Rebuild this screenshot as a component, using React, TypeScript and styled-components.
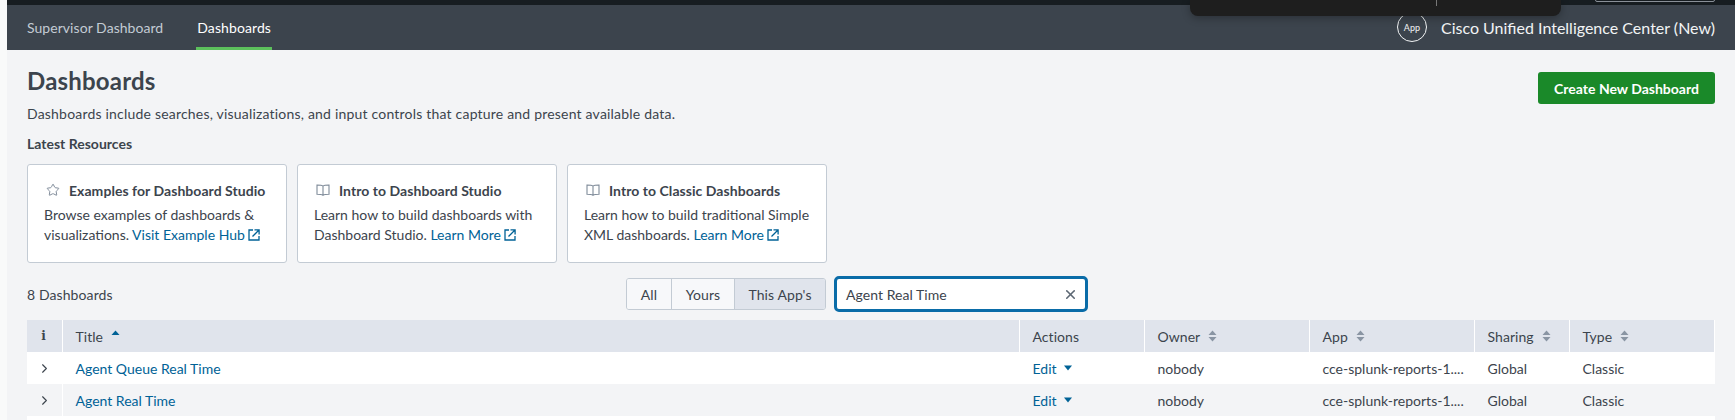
import { FC, ReactNode } from 'react'
import { ChevronRight, Star, X } from 'lucide-react'
import styled, { createGlobalStyle } from 'styled-components'

const colors = {
  page: '#f3f4f6',
  strip: '#f9fafa',
  nav: '#3c444d',
  top: '#171d21',
  text: '#3c444d',
  link: '#006296',
  head: '#e0e4ec',
  line: '#c3cbd4',
  focus: '#0a6ca8',
}

const GlobalStyle = createGlobalStyle`
  html, body {
    margin: 0;
    padding: 0;
    height: 420px;
    overflow: hidden;
    background: ${colors.strip};
  }
  body {
    font-family: Lato, "Open Sans", sans-serif;
    font-size: 14px;
    color: ${colors.text};
  }
  * {
    box-sizing: border-box;
  }
`

const Shell = styled.div`
  position: relative;
  margin-left: 7px;
  height: 420px;
  overflow: hidden;
  background: ${colors.page};
`

const TopBar = styled.div`
  height: 5px;
  background: ${colors.top};
`

const TopBox = styled.div`
  position: absolute;
  top: -4px;
  left: 1588px;
  width: 120px;
  height: 6px;
  border: 1px solid #8a9098;
  border-radius: 2px;
`

const Overlay = styled.div`
  position: absolute;
  top: 0;
  left: 1183px;
  width: 371px;
  height: 16px;
  background: #1e1e1e;
  border-radius: 0 0 8px 8px;
  box-shadow: 0 2px 8px rgba(0, 0, 0, 0.3);
  z-index: 2;
`

const OverlayRule = styled.div`
  position: absolute;
  top: 0;
  left: 246px;
  width: 1px;
  height: 6px;
  background: #777;
`

const Nav = styled.nav`
  display: flex;
  align-items: stretch;
  height: 45px;
  padding: 0 20px;
  background: ${colors.nav};
`

const Tab = styled.a<{ $active?: boolean }>`
  display: flex;
  align-items: center;
  margin-right: ${(p) => (p.$active ? 0 : '33px')};
  padding: 0 ${(p) => (p.$active ? '1px' : 0)};
  font-size: 14px;
  letter-spacing: ${(p) => (p.$active ? '0.1px' : '0.05px')};
  color: ${(p) => (p.$active ? '#ffffff' : '#c3cbd4')};
  border-bottom: 3px solid ${(p) => (p.$active ? '#5cc05c' : 'transparent')};
  border-top: 3px solid transparent;
`

const AppInfo = styled.div`
  display: flex;
  align-items: center;
  gap: 14px;
  margin-left: auto;
  color: #f2f4f5;
  font-size: 16px;
`

const AppBadge = styled.span`
  display: flex;
  align-items: center;
  justify-content: center;
  width: 30px;
  height: 30px;
  margin-top: -1px;
  border: 1px solid #f2f4f5;
  border-radius: 50%;
  font-size: 9px;
`

const Main = styled.main`
  padding: 0 20px;
`

const Header = styled.div`
  display: flex;
  justify-content: space-between;
  align-items: flex-start;
  height: 56px;
  padding-top: 16px;
`

const Title = styled.h1`
  margin: 0;
  font-size: 24px;
  line-height: 30px;
  font-weight: 700;
  letter-spacing: 0.2px;
  color: ${colors.text};
`

const CreateButton = styled.button`
  width: 177px;
  height: 32px;
  margin-top: 6px;
  padding: 0;
  border: 0;
  border-radius: 3px;
  font-family: inherit;
  font-size: 14px;
  font-weight: 700;
  color: #ffffff;
  background: #1a8929;
`

const Description = styled.p`
  margin: 0;
  height: 20px;
  line-height: 16px;
  font-size: 14px;
  letter-spacing: 0.2px;
`

const SectionLabel = styled.h2`
  margin: 0;
  padding-top: 9px;
  height: 38px;
  font-size: 14px;
  line-height: 18px;
  font-weight: 700;
`

const Cards = styled.div`
  display: flex;
  gap: 10px;
`

const Card = styled.div`
  width: 260px;
  height: 99px;
  padding: 15px 16px 0;
  background: #ffffff;
  border: 1px solid ${colors.line};
  border-radius: 3px;
`

const CardTitle = styled.div`
  display: flex;
  align-items: center;
  gap: 9px;
  height: 20px;
  padding-left: 2px;
  margin-bottom: 5px;
  font-weight: 700;
  letter-spacing: 0.05px;
  svg {
    flex: none;
    color: #7f8b99;
  }
`

const CardBody = styled.div`
  line-height: 20px;
  white-space: nowrap;
`

const CardLink = styled.a`
  color: ${colors.link};
  svg {
    margin-left: 3px;
    vertical-align: -1px;
  }
`

const Toolbar = styled.div`
  position: relative;
  display: flex;
  align-items: center;
  height: 36px;
  margin: 13px 0 8px;
`

const Count = styled.div`
  width: 599px;
  letter-spacing: 0.1px;
`

const Segments = styled.div`
  display: flex;
  height: 32px;
  border: 1px solid ${colors.line};
  border-radius: 3px;
  overflow: hidden;
`

const Segment = styled.div<{ $width: number; $active?: boolean }>`
  display: flex;
  align-items: center;
  justify-content: center;
  width: ${(p) => p.$width}px;
  border-left: ${(p) => (p.$width === 44 ? 0 : `1px solid ${colors.line}`)};
  letter-spacing: 0.1px;
  background: ${(p) => (p.$active ? colors.head : '#f7f8fa')};
`

const Search = styled.div`
  display: flex;
  align-items: center;
  justify-content: space-between;
  width: 254px;
  height: 36px;
  margin-left: 8px;
  padding: 0 7px 0 9px;
  background: #ffffff;
  border: 3px solid ${colors.focus};
  border-radius: 5px;
  letter-spacing: 0.05px;
  svg {
    color: #5c6773;
  }
`

const Table = styled.div`
  display: grid;
  grid-template-columns: 36px 957px 125px 165px 165px 95px 145px;
  grid-auto-rows: 32px;
`

const HeadCell = styled.div<{ $first?: boolean }>`
  display: flex;
  align-items: center;
  gap: 8px;
  padding-left: ${(p) => (p.$first ? 0 : '12.5px')};
  justify-content: ${(p) => (p.$first ? 'center' : 'flex-start')};
  background: ${colors.head};
  border-right: 1px solid #ffffff;
  letter-spacing: 0.05px;
  &:last-of-type {
    border-right: 0;
  }
`

const InfoGlyph = styled.span`
  font-family: "DejaVu Serif", serif;
  font-weight: 700;
  font-size: 12px;
  padding-right: 2px;
`

const Cell = styled.div<{ $odd: boolean; $first?: boolean; $full?: boolean }>`
  display: flex;
  align-items: center;
  justify-content: ${(p) => (p.$first ? 'center' : 'flex-start')};
  gap: 7px;
  padding-left: ${(p) => (p.$first ? 0 : '12.5px')};
  background: ${(p) => (p.$odd ? '#ffffff' : colors.page)};
  border-right: ${(p) => (p.$first ? '1px solid #ffffff' : 0)};
  grid-column: ${(p) => (p.$full ? '1 / -1' : 'auto')};
  svg {
    flex: none;
  }
`

const RowLink = styled.a`
  color: ${colors.link};
`

const ExternalIcon = () => (
  <svg width="12" height="12" viewBox="0 0 12 12" fill="none" stroke={colors.link} strokeWidth="1.3">
    <path d="M5 1H1v10h10V7" />
    <path d="M4.5 7.5L10.5 1.5M6.5 .9h4.6v4.6" />
  </svg>
)

const BookIcon = () => (
  <svg width="14" height="12" viewBox="0 0 14 12" fill="none" stroke="currentColor" strokeWidth="1.1">
    <path d="M7 2.2C6 1.2 4.5 1 1 1v9.2c3.5 0 5 .2 6 1 1-.8 2.5-1 6-1V1C9.5 1 8 1.2 7 2.2zM7 2.2v9" />
  </svg>
)

const SortBoth = () => (
  <svg width="9" height="12" viewBox="0 0 9 12" fill="#8a95a3">
    <path d="M4.5 0.5L8.5 5H.5zM4.5 11.5L.5 7h8z" />
  </svg>
)

const SortUp = styled.svg.attrs({ width: 9, height: 10, viewBox: '0 0 9 10', fill: colors.link })`
  margin-top: -4px;
`

const Caret = () => (
  <svg width="8" height="6" viewBox="0 0 8 6" fill={colors.link}>
    <path d="M0 .5h8L4 5.5z" />
  </svg>
)

const resources: { icon: ReactNode; title: string; text: ReactNode; link: string }[] = [
  {
    icon: <Star size={14} strokeWidth={1.7} />,
    title: 'Examples for Dashboard Studio',
    text: (
      <>
        Browse examples of dashboards &amp;
        <br />
        visualizations.{' '}
      </>
    ),
    link: 'Visit Example Hub',
  },
  {
    icon: <BookIcon />,
    title: 'Intro to Dashboard Studio',
    text: (
      <>
        Learn how to build dashboards with
        <br />
        Dashboard Studio.{' '}
      </>
    ),
    link: 'Learn More',
  },
  {
    icon: <BookIcon />,
    title: 'Intro to Classic Dashboards',
    text: (
      <>
        Learn how to build traditional Simple
        <br />
        XML dashboards.{' '}
      </>
    ),
    link: 'Learn More',
  },
]

const rows = ['Agent Queue Real Time', 'Agent Real Time']

const App: FC = () => (
  <>
    <GlobalStyle />
    <Shell>
      <TopBar />
      <TopBox />
      <Overlay>
        <OverlayRule />
      </Overlay>
      <Nav>
        <Tab>Supervisor Dashboard</Tab>
        <Tab $active>Dashboards</Tab>
        <AppInfo>
          <AppBadge>App</AppBadge>
          Cisco Unified Intelligence Center (New)
        </AppInfo>
      </Nav>
      <Main>
        <Header>
          <Title>Dashboards</Title>
          <CreateButton>Create New Dashboard</CreateButton>
        </Header>
        <Description>
          Dashboards include searches, visualizations, and input controls that capture and present available data.
        </Description>
        <SectionLabel>Latest Resources</SectionLabel>
        <Cards>
          {resources.map((r) => (
            <Card key={r.title}>
              <CardTitle>
                {r.icon}
                {r.title}
              </CardTitle>
              <CardBody>
                {r.text}
                <CardLink>
                  {r.link}
                  <ExternalIcon />
                </CardLink>
              </CardBody>
            </Card>
          ))}
        </Cards>
        <Toolbar>
          <Count>8 Dashboards</Count>
          <Segments>
            <Segment $width={44}>All</Segment>
            <Segment $width={63}>Yours</Segment>
            <Segment $width={91} $active>
              This App's
            </Segment>
          </Segments>
          <Search>
            Agent Real Time
            <X size={15} strokeWidth={2.5} />
          </Search>
        </Toolbar>
        <Table>
          <HeadCell $first>
            <InfoGlyph>i</InfoGlyph>
          </HeadCell>
          <HeadCell>
            Title
            <SortUp>
              <path d="M4.5 1.5L8.5 6H.5z" />
            </SortUp>
          </HeadCell>
          <HeadCell>Actions</HeadCell>
          <HeadCell>
            Owner <SortBoth />
          </HeadCell>
          <HeadCell>
            App <SortBoth />
          </HeadCell>
          <HeadCell>
            Sharing <SortBoth />
          </HeadCell>
          <HeadCell>
            Type <SortBoth />
          </HeadCell>
          {rows.map((name, i) => {
            const odd = i % 2 === 0
            return [
              <Cell key={`${name}-x`} $odd={odd} $first>
                <ChevronRight size={15} strokeWidth={1.8} />
              </Cell>,
              <Cell key={`${name}-t`} $odd={odd}>
                <RowLink>{name}</RowLink>
              </Cell>,
              <Cell key={`${name}-a`} $odd={odd}>
                <RowLink>Edit</RowLink>
                <Caret />
              </Cell>,
              <Cell key={`${name}-o`} $odd={odd}>
                nobody
              </Cell>,
              <Cell key={`${name}-p`} $odd={odd}>
                cce-splunk-reports-1....
              </Cell>,
              <Cell key={`${name}-s`} $odd={odd}>
                Global
              </Cell>,
              <Cell key={`${name}-c`} $odd={odd}>
                Classic
              </Cell>,
            ]
          })}
          <Cell $odd $full />
        </Table>
      </Main>
    </Shell>
  </>
)

export default App
